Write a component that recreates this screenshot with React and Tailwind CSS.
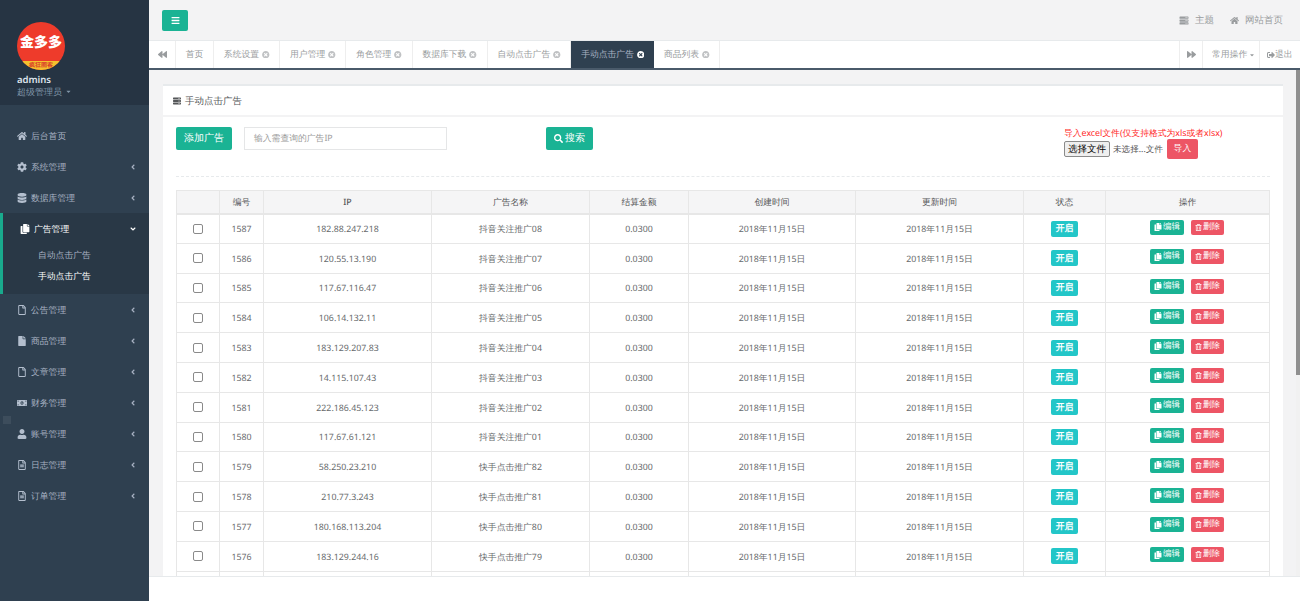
import React from 'react';
import { FaHome, FaCog, FaDatabase, FaCopy, FaRegFile, FaFile, FaMoneyBillAlt, FaUser, FaRegFileAlt, FaAngleLeft, FaAngleDown, FaBars, FaBackward, FaForward, FaTimesCircle, FaSearch, FaRegTrashAlt, FaServer, FaCaretDown, FaSignOutAlt } from 'react-icons/fa';

const menuTop = [
  { icon: FaHome, label: '后台首页', noArrow: true },
  { icon: FaCog, label: '系统管理' },
  { icon: FaDatabase, label: '数据库管理' },
];
const menuBottom = [
  { icon: FaRegFile, label: '公告管理' },
  { icon: FaFile, label: '商品管理' },
  { icon: FaRegFile, label: '文章管理' },
  { icon: FaMoneyBillAlt, label: '财务管理' },
  { icon: FaUser, label: '账号管理' },
  { icon: FaRegFileAlt, label: '日志管理' },
  { icon: FaRegFileAlt, label: '订单管理' },
];
const tabs = [
  { label: '首页', plain: true },
  { label: '系统设置' },
  { label: '用户管理' },
  { label: '角色管理' },
  { label: '数据库下载' },
  { label: '自动点击广告' },
  { label: '手动点击广告', active: true },
  { label: '商品列表' },
];
const rows = [
  ['1587', '182.88.247.218', '抖音关注推广08'],
  ['1586', '120.55.13.190', '抖音关注推广07'],
  ['1585', '117.67.116.47', '抖音关注推广06'],
  ['1584', '106.14.132.11', '抖音关注推广05'],
  ['1583', '183.129.207.83', '抖音关注推广04'],
  ['1582', '14.115.107.43', '抖音关注推广03'],
  ['1581', '222.186.45.123', '抖音关注推广02'],
  ['1580', '117.67.61.121', '抖音关注推广01'],
  ['1579', '58.250.23.210', '快手点击推广82'],
  ['1578', '210.77.3.243', '快手点击推广81'],
  ['1577', '180.168.113.204', '快手点击推广80'],
  ['1576', '183.129.244.16', '快手点击推广79'],
];
const headers = ['', '编号', 'IP', '广告名称', '结算金额', '创建时间', '更新时间', '状态', '操作'];

function MenuItem({ icon: Icon, label, noArrow }) {
  return (
    <div className="flex h-[31px] items-center pl-[17px] pr-[12px] text-[#a7b1c2]">
      <Icon className="w-[10px] h-[10px] shrink-0 text-[#b4bfce]" />
      <span className="ml-[4px] pt-[2px]">{label}</span>
      {!noArrow && <FaAngleLeft className="ml-auto w-[8px] h-[8px]" />}
    </div>
  );
}

export default function App() {
  return (
    <div className="relative flex h-[601px] w-[1300px] overflow-hidden bg-[#f3f3f4] font-['Open_Sans','Noto_Sans_CJK_SC',sans-serif] text-[8.8px] text-[#676a6c] [text-rendering:geometricPrecision]">
      <aside className="relative w-[149px] shrink-0 bg-[#2f4050]">
        <div className="h-[105px] bg-[#263443] pl-[17px] pt-[22px]">
          <svg width="48" height="48" viewBox="0 0 48 48" className="block">
            <defs>
              <clipPath id="c"><circle cx="24" cy="24" r="24" /></clipPath>
            </defs>
            <circle cx="24" cy="24" r="24" fill="#ee3b2b" />
            <rect x="0" y="39" width="48" height="9" fill="#f4c22e" clipPath="url(#c)" />
            <text x="24" y="25" textAnchor="middle" fontSize="14" fontWeight="900" fill="#ffffff" fontFamily="'Noto Sans CJK SC', sans-serif">金多多</text>
            <text x="24" y="45" textAnchor="middle" fontSize="6" fontWeight="700" fill="#d9402a" fontFamily="'Noto Sans CJK SC', sans-serif">疯狂圈客</text>
          </svg>
          <div className="mt-[3px] text-[9.5px] font-semibold leading-[13px] text-[#dfe4ed]">admins</div>
          <div className="flex items-center gap-[3px] text-[9px] leading-[11px] text-[#8095a8]">
            超级管理员 <FaCaretDown className="h-[7px] w-[7px]" />
          </div>
        </div>
        <nav className="pt-[15px]">
          {menuTop.map((m) => <MenuItem key={m.label} {...m} />)}
          <div className="h-[81px] border-l-[3px] border-[#19aa8d] bg-[#293846]">
            <div className="flex h-[31px] items-center pl-[17px] pr-[12px] text-white">
              <FaCopy className="h-[10px] w-[10px] shrink-0" />
              <span className="ml-[4px] pt-[2px]">广告管理</span>
              <FaAngleDown className="ml-auto h-[8px] w-[8px]" />
            </div>
            <div className="flex h-[21px] items-center pl-[35px] pt-[2px] text-[#a7b1c2]">自动点击广告</div>
            <div className="flex h-[21px] items-center pl-[35px] pt-[2px] text-white">手动点击广告</div>
          </div>
          {menuBottom.map((m) => <MenuItem key={m.label} {...m} />)}
        </nav>
        <div className="absolute left-[3px] top-[416px] h-[8px] w-[8px] bg-[#3d4d5c]" />
      </aside>

      <main className="relative flex min-w-0 flex-1 flex-col">
        <header className="flex h-[41px] shrink-0 items-center border-b border-[#e7eaec] pl-[13px] pr-[17px]">
          <button className="flex h-[21px] w-[26px] items-center justify-center rounded-[2px] bg-[#1ab394] text-white">
            <FaBars className="h-[9px] w-[9px]" />
          </button>
          <div className="ml-auto flex items-center text-[9.5px] text-[#999c9e]">
            <FaServer className="h-[9px] w-[10px]" />
            <span className="ml-[6px]">主题</span>
            <FaHome className="ml-[16px] h-[9px] w-[9px]" />
            <span className="ml-[6px]">网站首页</span>
          </div>
        </header>

        <div className="flex h-[29px] shrink-0 border-b-2 border-[#4a5a6a] bg-white text-[#999c9e]">
          <div className="flex w-[27px] items-center justify-center border-r border-[#eeeeee]">
            <FaBackward className="h-[9px] w-[9px]" />
          </div>
          {tabs.map((t) => (
            <div
              key={t.label}
              className={
                t.active
                  ? 'flex items-center gap-[3px] bg-[#2f4050] px-[9.75px] text-[#a7b1c2]'
                  : 'flex items-center gap-[3px] border-r border-[#eeeeee] px-[9.75px]'
              }
            >
              <span>{t.label}</span>
              {!t.plain && <FaTimesCircle className={t.active ? 'h-[7.5px] w-[7.5px] text-white' : 'h-[7.5px] w-[7.5px] text-[#c0c2c4]'} />}
            </div>
          ))}
          <div className="ml-auto flex w-[24px] items-center justify-center border-x border-[#eeeeee]">
            <FaForward className="h-[9px] w-[9px]" />
          </div>
          <div className="flex w-[57px] items-center gap-[2px] border-r border-[#eeeeee] pl-[9px]">
            常用操作 <FaCaretDown className="h-[6px] w-[6px]" />
          </div>
          <div className="flex w-[40px] items-center pl-[7px]">
            <FaSignOutAlt className="h-[8px] w-[8px]" />
            <span>退出</span>
          </div>
        </div>

        <div className="min-h-0 flex-1 overflow-hidden px-[14px] pr-[17px] pt-[14px]">
          <section className="border-t-2 border-[#e7eaec] bg-white">
            <div className="flex h-[31px] items-center gap-[3px] border-b-2 border-[#f3f3f4] pl-[9px] text-[9.5px] font-medium text-[#555759]">
              <FaServer className="h-[8px] w-[10px]" />
              <span className="pt-[1px]">手动点击广告</span>
            </div>
            <div className="px-[13px] pt-[10px]">
              <div className="flex h-[50px] items-start border-b border-dashed border-[#e7eaec]">
                <button className="h-[23px] w-[56px] rounded-[2px] bg-[#1ab394] text-[9.5px] text-white">添加广告</button>
                <div className="ml-[12px] flex h-[23px] w-[203px] items-center border border-[#e5e6e7] px-[9px] text-[#9a9a9a]">输入需查询的广告IP</div>
                <button className="ml-[99px] flex h-[23px] w-[47px] items-center justify-center gap-[2px] rounded-[2px] bg-[#1ab394] text-[9.5px] text-white">
                  <FaSearch className="h-[9px] w-[9px]" />搜索
                </button>
                <div className="ml-auto mr-[46px] w-[160px] pt-[1px]">
                  <div className="leading-[11px] whitespace-nowrap text-[#ff2a2a]">导入excel文件(仅支持格式为xls或者xlsx)</div>
                  <div className="flex items-start">
                    <span className="mt-[2px] flex h-[16px] w-[46px] items-center justify-center rounded-[2px] border border-[#8a8a8a] bg-[#efefef] text-[9.5px] text-black">选择文件</span>
                    <span className="ml-[3px] mt-[2px] text-[8.6px] leading-[16px] whitespace-nowrap text-[#555555]">未选择...文件</span>
                    <span className="ml-[4px] flex h-[20px] w-[31px] shrink-0 items-center justify-center rounded-[2px] bg-[#ed5565] text-white">导入</span>
                  </div>
                </div>
              </div>

              <table className="mt-[13px] w-[1093px] table-fixed border-collapse">
                <colgroup>
                  <col className="w-[43px]" />
                  <col className="w-[44px]" />
                  <col className="w-[168px]" />
                  <col className="w-[158px]" />
                  <col className="w-[99px]" />
                  <col className="w-[167px]" />
                  <col className="w-[168px]" />
                  <col className="w-[82px]" />
                  <col className="w-[164px]" />
                </colgroup>
                <thead>
                  <tr className="h-[23px] bg-[#f5f5f6]">
                    {headers.map((h, i) => (
                      <th key={i} className="border border-[#e7e7e7] border-b-2 p-0 pt-[1px] text-center font-medium text-[#555759]">{h}</th>
                    ))}
                  </tr>
                </thead>
                <tbody>
                  {rows.map((r) => (
                    <tr key={r[0]} className="h-[29.8px] text-center">
                      <td className="border border-[#e7e7e7] p-0">
                        <span className="mx-auto block h-[10px] w-[10px] rounded-[2px] border border-[#8a8a8a] bg-white" />
                      </td>
                      <td className="border border-[#e7e7e7] p-0 pt-[2px]">{r[0]}</td>
                      <td className="border border-[#e7e7e7] p-0 pt-[2px]">{r[1]}</td>
                      <td className="border border-[#e7e7e7] p-0 pt-[2px]">{r[2]}</td>
                      <td className="border border-[#e7e7e7] p-0 pt-[2px]">0.0300</td>
                      <td className="border border-[#e7e7e7] p-0 pt-[2px]">2018年11月15日</td>
                      <td className="border border-[#e7e7e7] p-0 pt-[2px]">2018年11月15日</td>
                      <td className="border border-[#e7e7e7] p-0">
                        <span className="mx-auto flex h-[16px] w-[27px] items-center justify-center rounded-[2px] bg-[#23c6c8] font-semibold text-white">开启</span>
                      </td>
                      <td className="border border-[#e7e7e7] p-0">
                        <div className="-mt-[3px] flex justify-center gap-[7px] pr-[1px]">
                          <span className="flex h-[15px] w-[34px] items-center justify-center gap-[1px] rounded-[2px] bg-[#1ab394] text-[8.5px] text-white">
                            <FaCopy className="h-[8px] w-[8px]" />编辑
                          </span>
                          <span className="flex h-[15px] w-[33px] items-center justify-center gap-[1px] rounded-[2px] bg-[#ed5565] text-[8.5px] text-white">
                            <FaRegTrashAlt className="h-[7px] w-[7px]" />删除
                          </span>
                        </div>
                      </td>
                    </tr>
                  ))}
                  <tr className="h-[29.8px]">
                    {headers.map((h, i) => <td key={i} className="border border-[#e7e7e7] p-0" />)}
                  </tr>
                </tbody>
              </table>
            </div>
          </section>
        </div>

        <footer className="h-[25px] shrink-0 border-t border-[#e7eaec] bg-white" />
        <div className="absolute right-0 top-[70px] h-[506px] w-[4px] bg-[#f1f1f1]">
          <div className="h-[305px] w-full bg-[#8f8f8f]" />
        </div>
      </main>
    </div>
  );
}
